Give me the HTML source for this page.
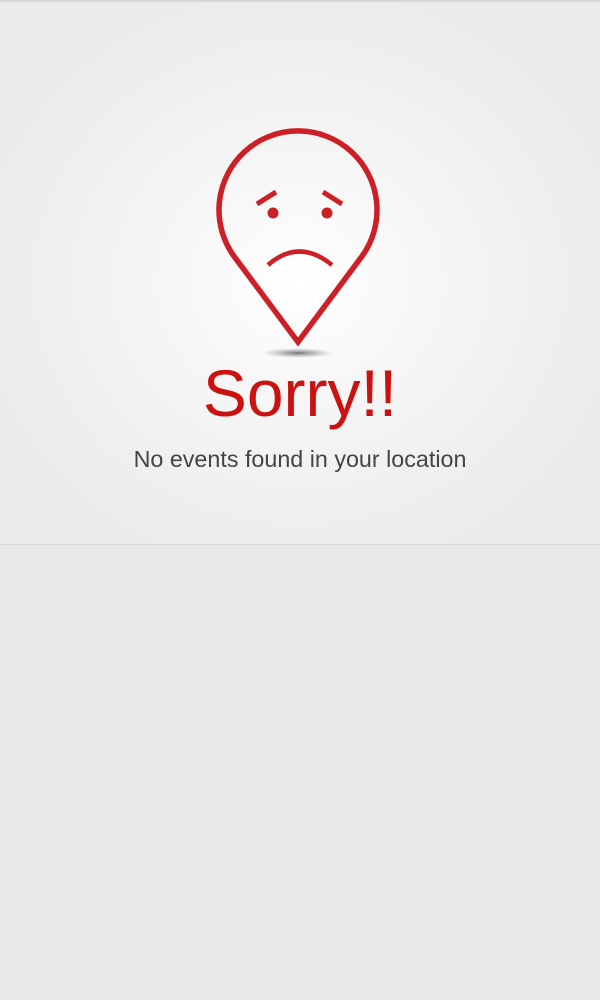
<!DOCTYPE html>
<html><head><meta charset="utf-8"><style>
html,body{margin:0;padding:0;width:600px;height:1000px;overflow:hidden;background:#e9e9e9;font-family:"Liberation Sans",sans-serif}
.top{position:absolute;left:0;top:0;width:600px;height:545px;background:radial-gradient(ellipse 330px 300px at 300px 280px,#ffffff 0%,#f6f6f6 40%,#ebebeb 100%);border-top:2px solid #d6d6d6;box-sizing:border-box;border-bottom:1px solid #d8d8d8}
.bot{position:absolute;left:0;top:546px;width:600px;height:454px;background:#e9e9e9}
svg{position:absolute;left:0;top:0}
.sorry{position:absolute;left:0;width:600px;top:355px;text-align:center;font-size:66px;color:#cc1111;font-weight:300}
.sub{position:absolute;left:0;width:600px;top:446px;text-align:center;font-size:23.3px;color:#444}
</style></head><body>
<div class="top"></div><div class="bot"></div>
<svg width="600" height="400" viewBox="0 0 600 400">
<defs><radialGradient id="sh"><stop offset="0" stop-color="#555" stop-opacity=".8"/><stop offset="1" stop-color="#888" stop-opacity="0"/></radialGradient></defs>
<ellipse cx="298" cy="353" rx="36" ry="5" fill="url(#sh)"/>
<path d="M298 342 L361.3 257.2 A79 79 0 1 0 234.7 257.2 Z" fill="none" stroke="#cc1f26" stroke-width="5.5" stroke-linejoin="miter"/>
<path d="M257 204 L276 192 M323 192 L342 204" stroke="#cc1f26" stroke-width="5"/>
<circle cx="273" cy="213" r="5.5" fill="#cc1f26"/>
<circle cx="327" cy="213" r="5.5" fill="#cc1f26"/>
<path d="M268 265 Q299 238 332 265" fill="none" stroke="#cc1f26" stroke-width="4.5"/>
</svg>
<div class="sorry">Sorry!!</div>
<div class="sub">No events found in your location</div>
</body></html>
